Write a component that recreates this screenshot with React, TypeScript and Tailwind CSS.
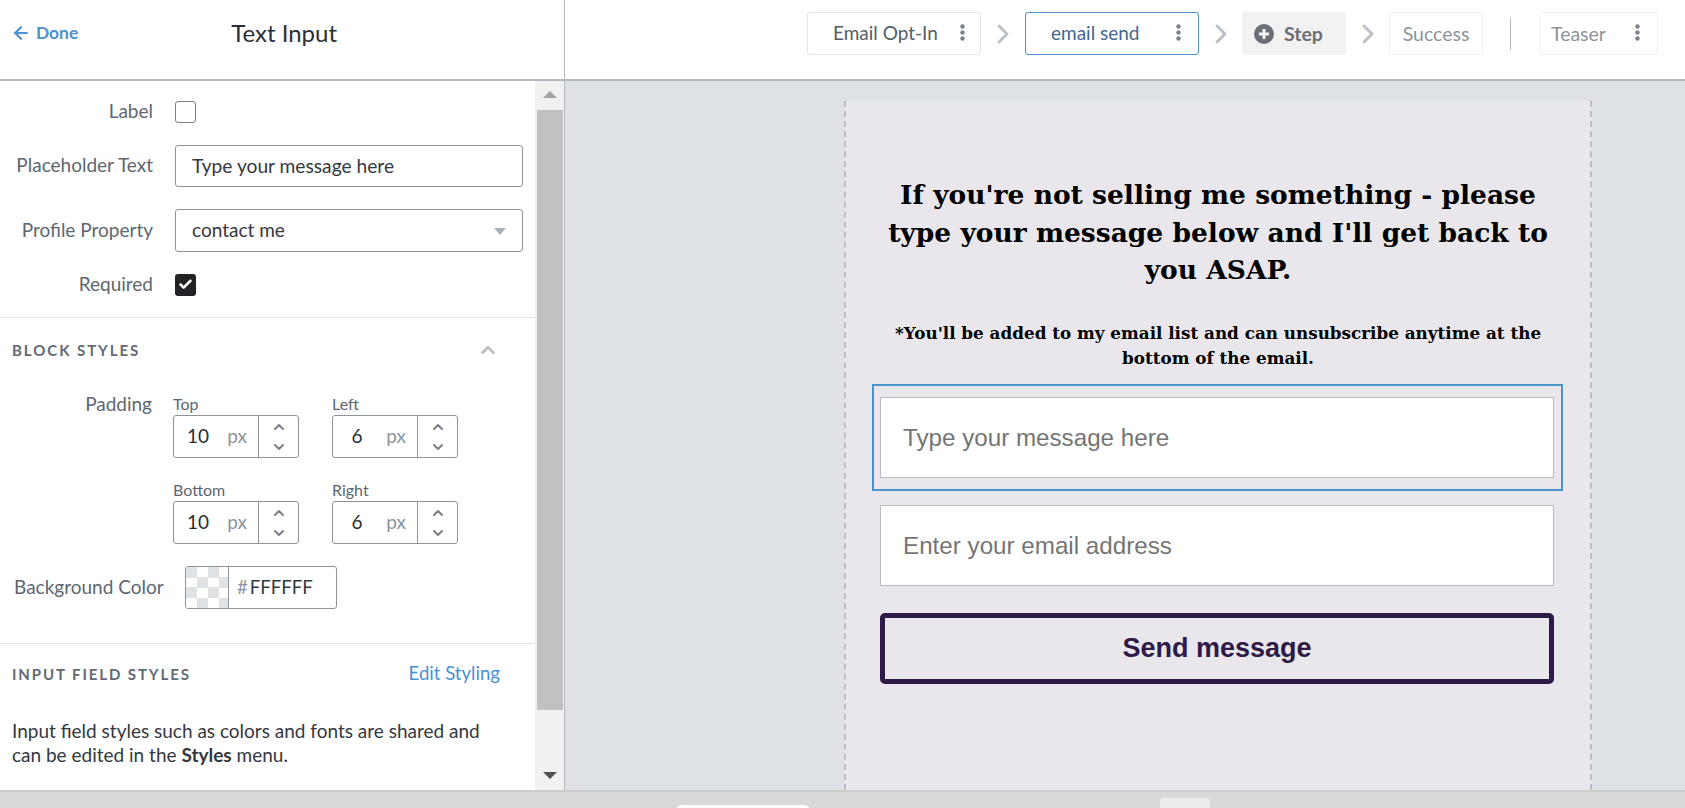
import { ArrowLeft, Check, ChevronDown, ChevronRight, ChevronUp } from "lucide-react"

const uiFont = "font-['Lato','Open_Sans',sans-serif]"

function Dots({ className }: { className: string }) {
  return (
    <svg width="5" height="17" viewBox="0 0 5 17" className={className}>
      <circle cx="2.5" cy="2.5" r="2.2" fill="currentColor" />
      <circle cx="2.5" cy="8.5" r="2.2" fill="currentColor" />
      <circle cx="2.5" cy="14.5" r="2.2" fill="currentColor" />
    </svg>
  )
}

function Arrow() {
  return <ChevronRight className="h-8 w-8 shrink-0 text-[#bcc1c7]" strokeWidth={2.2} />
}

function NumberField({ label, value }: { label: string; value: string }) {
  return (
    <div className="w-[126px]">
      <div className="h-[18px] text-[16px] leading-[18px] text-[#5e6670]">{label}</div>
      <div className="mt-[2px] flex h-[43px] items-center rounded-[3px] border border-[#8f949b]">
        <span className="w-[48px] text-center text-[19px] text-[#2a2e33]">{value}</span>
        <span className="w-[30px] text-center text-[19px] text-[#8d949c]">px</span>
        <div className="ml-auto flex h-full w-[40px] flex-col items-center justify-center gap-[4px] border-l border-[#8f949b] text-[#79808a]">
          <ChevronUp className="h-4 w-4" strokeWidth={3} />
          <ChevronDown className="h-4 w-4" strokeWidth={3} />
        </div>
      </div>
    </div>
  )
}

function Checker() {
  return (
    <svg width="42" height="41" viewBox="0 0 42 41" className="shrink-0">
      <rect width="42" height="41" fill="#fff" />
      {[
        [0, 0], [22, 0], [11, 10], [33, 10], [0, 20], [22, 20], [11, 31], [33, 31],
      ].map(([x, y]) => (
        <rect key={`${x}-${y}`} x={x} y={y} width="11" height="11" fill="#e0e3e6" />
      ))}
    </svg>
  )
}

function Sidebar() {
  return (
    <aside className={`flex w-[565px] shrink-0 flex-col border-r border-[#b4b9c0] bg-white ${uiFont}`}>
      <header className="flex h-[81px] shrink-0 items-center border-b-2 border-[#b4b9c0] pb-[14px]">
        <ArrowLeft className="ml-[11px] h-[20px] w-[20px] text-[#4a90d2]" strokeWidth={2.6} />
        <span className="ml-[5px] mt-[1px] text-[17.4px] font-bold text-[#4a90d2]">Done</span>
        <h1 className="ml-[153px] text-[24px] text-[#2b3036]">Text Input</h1>
      </header>
      <div className="flex min-h-0 flex-1">
        <div className="w-[535px] shrink-0 text-[#5e6670]">
          <div className="mt-[20px] flex h-[21px] items-center">
            <div className="w-[153px] text-right text-[19px]">Label</div>
            <div className="ml-[22px] h-[22px] w-[21px] rounded-[3px] border border-[#7a7f86]" />
          </div>
          <div className="mt-[23px] flex h-[42px] items-center">
            <div className="w-[153px] pb-[2px] text-right text-[19px]">Placeholder Text</div>
            <input
              readOnly
              value="Type your message here"
              className="ml-[22px] h-full w-[348px] rounded-[3px] border border-[#8f949b] pb-[1px] pl-[16px] pr-[17px] text-[19.2px] text-[#33383e] outline-none"
            />
          </div>
          <div className="mt-[22px] flex h-[43px] items-center">
            <div className="w-[153px] text-right text-[19px]">Profile Property</div>
            <div className="relative ml-[22px] flex h-full w-[348px] items-center rounded-[3px] border border-[#8f949b] pl-[16px] pr-[17px] text-[19px] text-[#33383e]">
              contact me
              <span className="absolute right-[16px] top-[18px] h-0 w-0 border-x-[6px] border-t-[7px] border-x-transparent border-t-[#a9b2bd]" />
            </div>
          </div>
          <div className="mt-[22px] flex h-[21px] items-center">
            <div className="w-[153px] text-right text-[19px]">Required</div>
            <div className="ml-[22px] flex h-[22px] w-[21px] items-center justify-center rounded-[3px] bg-[#222326]">
              <Check className="h-[15px] w-[15px] text-white" strokeWidth={4} />
            </div>
          </div>

          <div className="mt-[22px] border-b border-[#e3e4e6]" />

          <div className="mt-[21px] flex h-[22px] items-center justify-between pl-[12px] pr-[36px]">
            <span className="text-[15px] font-bold tracking-[1.95px] text-[#626a73]">BLOCK STYLES</span>
            <ChevronUp className="h-[22px] w-[22px] text-[#b9bec4]" strokeWidth={3} />
          </div>

          <div className="mt-[34px] flex">
            <div className="w-[152px] text-right text-[19px] leading-[18px]">Padding</div>
            <div className="ml-[21px] grid grid-cols-[126px_126px] gap-x-[33px] gap-y-[23px]">
              <NumberField label="Top" value="10" />
              <NumberField label="Left" value="6" />
              <NumberField label="Bottom" value="10" />
              <NumberField label="Right" value="6" />
            </div>
          </div>

          <div className="mt-[22px] flex h-[43px] items-center">
            <div className="ml-[14px] w-[150px] whitespace-nowrap text-[19px]">Background Color</div>
            <div className="ml-[21px] flex h-full w-[152px] items-center overflow-hidden rounded-[3px] border border-[#8f949b]">
              <Checker />
              <div className="flex h-full flex-1 items-center border-l border-[#8f949b] pl-[8px] text-[18.6px] text-[#33383e]">
                <span className="mr-[2px] text-[#8d949c]">#</span>FFFFFF
              </div>
            </div>
          </div>

          <div className="mt-[34px] border-b border-[#e3e4e6]" />

          <div className="mt-[19px] flex h-[22px] items-center justify-between pl-[12px] pr-[35px]">
            <span className="text-[15px] font-bold tracking-[1.9px] text-[#626a73]">INPUT FIELD STYLES</span>
            <span className="text-[18.6px] text-[#4a90d2]">Edit Styling</span>
          </div>

          <p className="mt-[34px] whitespace-nowrap px-[12px] text-[19px] leading-[24px] text-[#33383e]">
            Input field styles such as colors and fonts are shared and
            <br />
            can be edited in the <b>Styles</b> menu.
          </p>
        </div>

        {/* Scrollbar */}
        <div className="relative flex w-[29px] flex-col items-center bg-[#f1f1f1]">
          <span className="absolute top-[10px] h-0 w-0 border-x-[7px] border-b-[7px] border-x-transparent border-b-[#a3a3a3]" />
          <div className="mt-[29px] h-[600px] w-[26px] bg-[#c1c1c1]" />
          <span className="absolute bottom-[11px] h-0 w-0 border-x-[7px] border-t-[7px] border-x-transparent border-t-[#505050]" />
        </div>
      </div>
    </aside>
  )
}

function StepBar() {
  return (
    <div className={`flex h-[81px] shrink-0 items-start border-b-2 border-[#b4b9c0] bg-white pt-[12px] pl-[242px] ${uiFont}`}>
      <div className="flex h-[43px] w-[174px] items-center rounded-[3px] border border-[#e3e4e6] pl-[25px] text-[19px] text-[#555c64]">
        Email Opt-In
        <Dots className="mb-[3px] ml-[22px] text-[#79808a]" />
      </div>
      <div className="mx-[8px] flex h-[43px] w-[28px] items-center justify-center"><Arrow /></div>
      <div className="flex h-[43px] w-[174px] items-center rounded-[3px] border border-[#4a90d2] pl-[25px] text-[19px] text-[#44678c]">
        email send
        <Dots className="mb-[3px] ml-[36px] text-[#79808a]" />
      </div>
      <div className="mx-[8px] flex h-[43px] w-[27px] items-center justify-center"><Arrow /></div>
      <div className="flex h-[43px] w-[104px] items-center rounded-[3px] bg-[#f2f2f2] pl-[12px] text-[19.5px] font-bold text-[#6b6f75]">
        <svg width="20" height="20" viewBox="0 0 20 20" className="mr-[10px]">
          <circle cx="10" cy="10" r="10" fill="#6b6f75" />
          <path d="M10 5v10M5 10h10" stroke="#f2f2f2" strokeWidth="3" />
        </svg>
        Step
      </div>
      <div className="mx-[8px] flex h-[43px] w-[27px] items-center justify-center"><Arrow /></div>
      <div className="flex h-[43px] w-[94px] items-center justify-center rounded-[3px] border border-[#f0f0f1] text-[19.5px] text-[#8d939a]">
        Success
      </div>
      <div className="ml-[27px] mt-[6px] h-[32px] w-px bg-[#b4b9c0]" />
      <div className="ml-[28px] flex h-[43px] w-[119px] items-center rounded-[3px] border border-[#f0f0f1] pl-[11px] text-[19.5px] text-[#8d939a]">
        Teaser
        <Dots className="mb-[3px] ml-[29px] text-[#79808a]" />
      </div>
    </div>
  )
}

function FormField({ placeholder }: { placeholder: string }) {
  return (
    <input
      readOnly
      placeholder={placeholder}
      className="block h-[81px] w-[674px] border border-[#bbbcc1] bg-white px-[22px] pt-[2px] font-['Liberation_Sans',sans-serif] text-[24.2px] outline-none placeholder:text-[#757575]"
    />
  )
}

function Canvas() {
  return (
    <div className="flex min-h-0 flex-1 justify-start bg-[#dee2e5] pl-[279px] pt-[20px]">
      <div className="w-[748px] border-x-2 border-dashed border-[#b9bfc5] bg-[#e9e7ec]">
        <div className="pt-[75px] text-center font-['DejaVu_Serif',serif] font-bold text-black">
          <h2 className="mx-auto w-[700px] text-[26.5px] leading-[37.5px]">
            If you're not selling me something - please
            <br />
            type your message below and I'll get back to
            <br />
            you ASAP.
          </h2>
          <p className="mx-auto mt-[32px] w-[660px] text-[16.8px] leading-[25px]">
            *You'll be added to my email list and can unsubscribe anytime at the bottom of the email.
          </p>
        </div>
        <div className="ml-[26px] mt-[13px] w-[691px] border-2 border-[#4a94cc] py-[11px] pl-[6px] pr-[5px]">
          <FormField placeholder="Type your message here" />
        </div>
        <div className="ml-[34px] mt-[14px]">
          <FormField placeholder="Enter your email address" />
        </div>
        <button className="ml-[34px] mt-[27px] h-[71px] w-[674px] rounded-[5px] border-[5px] border-[#2e1a47] font-['Liberation_Sans',sans-serif] text-[27px] font-bold text-[#2e1a47]">
          Send message
        </button>
      </div>
    </div>
  )
}

export default function App() {
  return (
    <div className="flex h-[808px] w-[1685px] flex-col overflow-hidden bg-[#d9d9d9]">
      <div className="flex h-[792px] shrink-0 border-b-2 border-[#cccccc]">
        <Sidebar />
        <main className="flex min-w-0 flex-1 flex-col">
          <StepBar />
          <Canvas />
        </main>
      </div>
      {/* Bits of the dock poking up at the bottom edge */}
      <div className="relative flex-1">
        <div className="absolute left-[676px] top-[13px] h-[6px] w-[134px] rounded-t-[10px] bg-white" />
        <div className="absolute left-[1160px] top-[6px] h-[14px] w-[50px] rounded-t-[4px] bg-[#ececec]" />
      </div>
    </div>
  )
}
